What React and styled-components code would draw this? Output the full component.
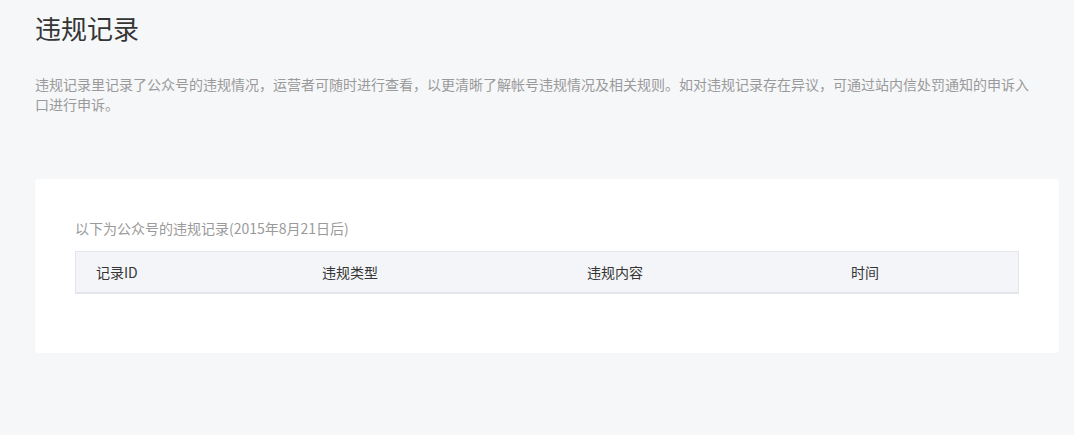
import React from 'react'
import styled, { createGlobalStyle } from "styled-components";

const GlobalStyle = createGlobalStyle`
  html, body {
    margin: 0;
    padding: 0;
    background: #f6f7f9;
  }
  body {
    font-family: "Noto Sans CJK SC", "Liberation Sans", sans-serif;
    color: #353535;
  }
`;

const Page = styled.div`
  padding: 0 15px 0 35px;
`;

const Title = styled.h2`
  margin: 0;
  padding-top: 10px;
  font-size: 26px;
  font-weight: 400;
  line-height: 36px;
  color: #353535;
`;

const Desc = styled.p`
  margin: 28px 0 0;
  padding-right: 24px;
  font-size: 14px;
  line-height: 20px;
  color: #9a9a9a;
`;

const Card = styled.div`
  margin-top: 65px;
  background: #fff;
  border-radius: 3px;
  box-shadow: 0 1px 2px rgba(0, 0, 0, 0.04);
  padding: 38px 40px 59px;
`;

const Caption = styled.div`
  font-size: 14px;
  line-height: 22px;
  color: #9a9a9a;
  margin-bottom: 12px;
`;

const HeadRow = styled.div`
  display: grid;
  grid-template-columns: 226px 265px 264px 1fr;
  height: 40px;
  align-items: center;
  background: #f4f5f9;
  border: 1px solid #e4e6eb;
  border-bottom-width: 2px;
  padding-left: 20px;
`;

const HeadCell = styled.div`
  font-size: 14px;
  color: #353535;
`;

const columns = ['记录ID', '违规类型', '违规内容', '时间'];

const App = () => {
  return (
    <Page>
      <GlobalStyle />
      <Title>违规记录</Title>
      <Desc>
        违规记录里记录了公众号的违规情况，运营者可随时进行查看，以更清晰了解帐号违规情况及相关规则。如对违规记录存在异议，可通过站内信处罚通知的申诉入口进行申诉。
      </Desc>
      <Card>
        <Caption>以下为公众号的违规记录(2015年8月21日后)</Caption>
        <HeadRow>
          {columns.map(c => <HeadCell key={c}>{c}</HeadCell>)}
        </HeadRow>
      </Card>
    </Page>
  );
}

export default App
